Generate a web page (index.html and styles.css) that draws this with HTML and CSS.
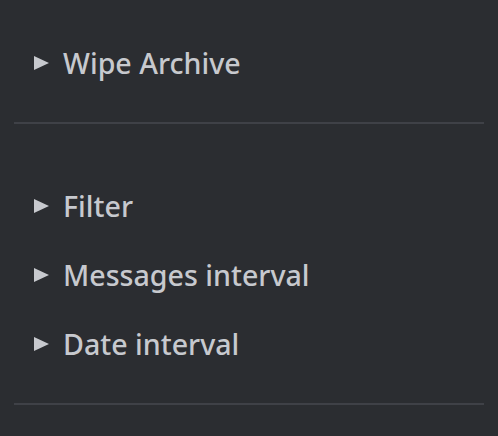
FILE: index.html
```html
<!DOCTYPE html>
<html lang="en">

<head>
    <meta charset="UTF-8" />
    <title>Archive options</title>
    <link rel="stylesheet" href="styles.css">
</head>

<body>
    <div class="panel">
        <div class="section first">
            <div class="toggle"><span class="arrow"></span>Wipe Archive</div>
        </div>
        <hr class="divider" />
        <div class="section second">
            <div class="toggle"><span class="arrow"></span>Filter</div>
            <div class="toggle"><span class="arrow"></span>Messages interval</div>
            <div class="toggle"><span class="arrow"></span>Date interval</div>
        </div>
        <hr class="divider" />
    </div>
</body>

</html>
```

FILE: styles.css
```css
html,
body {
    margin: 0;
    height: 100%;
    background-color: #2b2d31;
}

.panel {
    padding: 0 14px;
    font-family: "Noto Sans", sans-serif;
}

.section.first {
    padding-top: 28px;
    padding-bottom: 25px;
}

.section.second {
    padding-top: 47px;
    padding-bottom: 25px;
}

.toggle {
    display: flex;
    align-items: center;
    height: 69px;
    padding-left: 20px;
    font-size: 28.6px;
    font-weight: 500;
    color: #c7c9ce;
    cursor: pointer;
}

.arrow {
    width: 0;
    height: 0;
    border-top: 7.5px solid transparent;
    border-bottom: 7.5px solid transparent;
    border-left: 15px solid #c7c9ce;
    margin-right: 14px;
}

.divider {
    margin: 0;
    border: none;
    height: 2px;
    background-color: #3f4147;
}
```
